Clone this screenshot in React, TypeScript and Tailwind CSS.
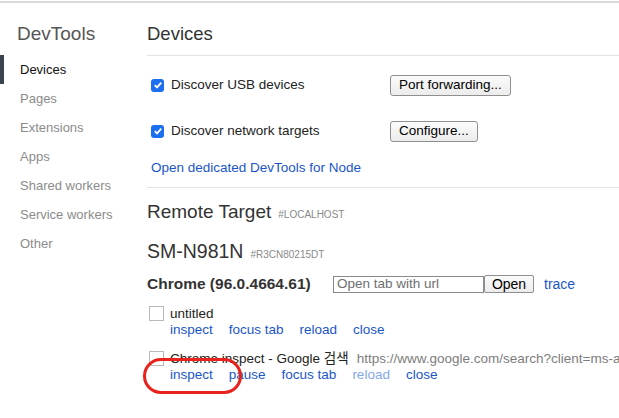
import React from "react";

const FONT = { fontFamily: '"Liberation Sans", Arial, "Noto Sans CJK KR", sans-serif' };

const sideItems = [
  "Devices",
  "Pages",
  "Extensions",
  "Apps",
  "Shared workers",
  "Service workers",
  "Other",
];

const Checked = () => (
  <div className="flex h-[13px] w-[13px] items-center justify-center rounded-[3px] bg-[#1a6ef0]">
    <svg width="10" height="10" viewBox="0 0 10 10">
      <path d="M1.8 5.2 L4 7.4 L8.3 2.6" fill="none" stroke="#fff" strokeWidth="1.9" />
    </svg>
  </div>
);

const MacButton = ({ label }: { label: string }) => (
  <button className="flex h-[21px] items-center rounded-[3px] border border-[#8f8f8f] bg-gradient-to-b from-[#fbfbfb] to-[#ececec] px-[8px] text-[13.5px] text-black">
    {label}
  </button>
);

const Links = ({ items }: { items: { label: string; dim?: boolean }[] }) => (
  <div className="flex h-[17px] items-center gap-4 text-[13.5px]">
    {items.map((item) => (
      <span key={item.label} className={item.dim ? "text-[#86a8e6]" : "text-[#1a56c8]"}>
        {item.label}
      </span>
    ))}
  </div>
);

const Target = ({
  title,
  url,
  links,
}: {
  title: string;
  url?: string;
  links: { label: string; dim?: boolean }[];
}) => (
  <div className="flex gap-[6px] pl-[2px]">
    <div className="h-[15px] w-[15px] shrink-0 border border-[#b8b8b8]" />
    <div className="flex flex-col">
      <div className="flex h-4 items-center gap-2 whitespace-nowrap text-[13.5px]">
        <span className="text-[#222]">{title}</span>
        {url && <span className="text-[#7d7d7d]">{url}</span>}
      </div>
      <Links items={links} />
    </div>
  </div>
);

export default function App() {
  return (
    <div className="relative h-[418px] w-[619px] overflow-hidden bg-white" style={FONT}>
      <div className="h-[3px] border-b-2 border-[#dadada]" />
      <div className="flex">
        <aside className="w-[147px] shrink-0">
          <div className="flex h-[52px] items-center pl-[17px] pt-[10px] text-[19px] text-[#555]">
            DevTools
          </div>
          {sideItems.map((item, i) => (
            <div
              key={item}
              className={`flex h-[29px] items-center border-l-4 pl-4 text-[13px] ${
                i === 0 ? "border-[#3c4350] text-[#111]" : "border-transparent text-[#8b8b8b]"
              }`}
            >
              {item}
            </div>
          ))}
        </aside>

        <main className="min-w-0 flex-1">
          <div className="flex h-[53px] items-center border-b border-[#e3e3e3] pt-[10px] text-[18.5px] text-[#333]">
            Devices
          </div>

          <section className="border-b border-[#e3e3e3] pb-[5px] pl-1 pt-[6px]">
            <div className="flex h-[46px] items-center">
              <div className="flex w-[239px] items-center gap-[7px]">
                <Checked />
                <span className="text-[13.5px] text-[#222]">Discover USB devices</span>
              </div>
              <MacButton label="Port forwarding..." />
            </div>
            <div className="flex h-[46px] items-center">
              <div className="flex w-[239px] items-center gap-[7px]">
                <Checked />
                <span className="text-[13.5px] text-[#222]">Discover network targets</span>
              </div>
              <MacButton label="Configure..." />
            </div>
            <div className="flex h-[28px] items-center text-[13.5px] text-[#1a56c8]">
              Open dedicated DevTools for Node
            </div>
          </section>

          <div className="flex h-[50px] items-center pb-[2px]">
            <div className="flex items-baseline gap-[7px]">
              <span className="text-[19px] text-[#333]">Remote Target</span>
              <span className="text-[10px] text-[#8a8a8a]">#LOCALHOST</span>
            </div>
          </div>

          <div className="flex h-[28px] items-center">
            <div className="flex items-baseline gap-[7px]">
              <span className="text-[19.5px] text-[#333]">SM-N981N</span>
              <span className="text-[10px] text-[#8a8a8a]">#R3CN80215DT</span>
            </div>
          </div>

          <div className="flex h-[36px] items-center">
            <span className="w-[186px] text-[15.5px] font-bold text-[#333]">Chrome (96.0.4664.61)</span>
            <div className="flex items-center">
              <input
                readOnly
                placeholder="Open tab with url"
                className="h-[17px] w-[151px] border border-[#8a8a8a] px-[3px] text-[13.5px] text-[#222] outline-none placeholder:text-[#6f6f6f]"
              />
              <button className="flex h-[18px] w-[50px] items-center justify-center rounded-[2px] border border-[#8f8f8f] bg-gradient-to-b from-[#fbfbfb] to-[#ececec] text-[14px] text-black">
                Open
              </button>
              <span className="ml-[10px] text-[14px] text-[#1a56c8]">trace</span>
            </div>
          </div>

          <div className="flex flex-col gap-[12px] pt-[4px]">
            <Target
              title="untitled"
              links={[
                { label: "inspect" },
                { label: "focus tab" },
                { label: "reload" },
                { label: "close" },
              ]}
            />
            <Target
              title="Chrome inspect - Google 검색"
              url="https://www.google.com/search?client=ms-android-samsung"
              links={[
                { label: "inspect" },
                { label: "pause" },
                { label: "focus tab" },
                { label: "reload", dim: true },
                { label: "close" },
              ]}
            />
          </div>
        </main>
      </div>

      <div className="absolute left-[143px] top-[358px] h-[36px] w-[99px] rounded-[18px] border-[3px] border-[#e8231d]" />
    </div>
  );
}
